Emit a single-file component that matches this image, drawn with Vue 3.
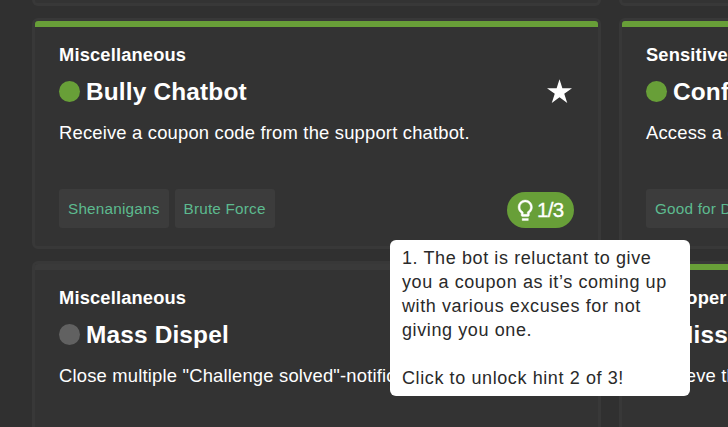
<script setup>
const rows = [
  [{ previous: true }, { previous: true }],
  [
    {
      category: 'Miscellaneous', name: 'Bully Chatbot', solved: true, star: true, hint: '1/3',
      description: 'Receive a coupon code from the support chatbot.',
      tags: ['Shenanigans', 'Brute Force'],
    },
    {
      category: 'Sensitive Data Exposure', name: 'Confidential Document', solved: true,
      description: 'Access a confidential document.',
      tags: ['Good for Demos'],
    },
  ],
  [
    {
      category: 'Miscellaneous', name: 'Mass Dispel', solved: false,
      description: 'Close multiple "Challenge solved"-notifications in one go.',
      tags: [],
    },
    {
      category: 'Improper Input Validation', name: 'Missing Encoding', solved: true,
      description: 'Retrieve the photo of the cat.',
      tags: [],
    },
  ],
]
</script>

<template>
  <main class="board">
    <div v-for="(row, r) in rows" :key="r" class="row">
      <article v-for="(card, c) in row" :key="c" class="card" :class="{ previous: card.previous }">
        <template v-if="!card.previous">
          <div class="bar" :class="{ solved: card.solved }"></div>
          <div class="body">
            <div class="category">{{ card.category }}</div>
            <div class="heading">
              <span class="dot" :class="{ solved: card.solved }"></span>
              <span class="name">{{ card.name }}</span>
              <svg v-if="card.star" class="star" viewBox="2 2 20 19">
                <path d="M12 2l2.3 7.2H22l-6.2 4.5L18.2 21 12 16.5 5.8 21l2.4-7.3L2 9.2h7.7z" />
              </svg>
            </div>
            <div class="description">{{ card.description }}</div>
            <div class="footer">
              <div class="tags"><span v-for="tag in card.tags" :key="tag" class="tag">{{ tag }}</span></div>
              <div v-if="card.hint" class="hint">
                <svg class="bulb" viewBox="0 0 24 24">
                  <path d="M9 20v2h6v-2zM12 2C8.14 2 5 5.14 5 9c0 2.38 1.19 4.47 3 5.74V17c0 .55.45 1 1 1h6c.55 0 1-.45 1-1v-2.26c1.81-1.27 3-3.36 3-5.74 0-3.86-3.14-7-7-7zm2.85 11.1l-.85.6V16h-4v-2.3l-.85-.6C7.8 12.16 7 10.63 7 9c0-2.76 2.24-5 5-5s5 2.24 5 5c0 1.63-.8 3.16-2.15 4.1z" />
                </svg>
                <span>{{ card.hint }}</span>
              </div>
            </div>
          </div>
        </template>
      </article>
    </div>
    <div class="tooltip">
      <p>1. The bot is reluctant to give you a coupon as it’s coming up with various excuses for not giving you one.</p>
      <p>Click to unlock hint 2 of 3!</p>
    </div>
  </main>
</template>

<style>
body { overflow: hidden; background: #303030; }
</style>

<style scoped>
.board {
  position: relative;
  box-sizing: border-box;
  width: 728px;
  height: 427px;
  overflow: hidden;
  display: flex;
  flex-direction: column;
  gap: 12px;
  padding-left: 32px;
  font-family: "Liberation Sans", Arial, sans-serif;
  color: #fff;
  background: #303030;
}
.row { display: flex; gap: 18px; flex: none; }
.card {
  box-sizing: border-box;
  flex: none;
  width: 569px;
  height: 231px;
  border: 3px solid #383838;
  border-radius: 6px;
  background: #333;
  overflow: hidden;
}
.card.previous { height: 6px; border-top: 0; border-radius: 0 0 6px 6px; }
.bar { height: 6px; background: #3a3a3a; }
.bar.solved { background: #689f38; }
.body { padding: 16px 24px 0; white-space: nowrap; }
.category { font-size: 18.3px; font-weight: 700; line-height: 24px; letter-spacing: 0.17px; }
.heading { display: flex; align-items: center; height: 35px; margin-top: 7px; }
.dot { width: 21px; height: 21px; margin-right: 6px; border-radius: 50%; background: #616161; }
.dot.solved { background: #689f38; }
.name { font-size: 24.4px; font-weight: 700; letter-spacing: 0.17px; }
.star { width: 25px; height: 24px; margin: 0 2px 1px auto; fill: #fff; }
.description { margin-top: 12px; font-size: 18.4px; line-height: 24px; letter-spacing: 0.19px; }
.footer { display: flex; justify-content: space-between; align-items: flex-end; height: 39px; margin-top: 44px; }
.tags { display: flex; gap: 6px; }
.tag {
  height: 39px;
  padding: 0 9px;
  border-radius: 3px;
  font-size: 15.3px;
  letter-spacing: 0.2px;
  line-height: 39px;
  color: #5dba8f;
  background: #3c3c3c;
}
.hint {
  box-sizing: border-box;
  display: flex;
  align-items: center;
  width: 67px;
  height: 36px;
  padding-left: 5.5px;
  border-radius: 18px;
  font-size: 20.5px;
  letter-spacing: -0.7px;
  -webkit-text-stroke: 0.3px #fff;
  background: #689f38;
}
.bulb { width: 24.5px; height: 24.5px; fill: #fff; stroke: #fff; stroke-width: 0.4px; }
.tooltip {
  position: absolute;
  left: 390px;
  top: 240px;
  box-sizing: border-box;
  width: 300px;
  height: 156px;
  padding: 6px 12px;
  border-radius: 6px;
  font-size: 18px;
  line-height: 24px;
  letter-spacing: 0.6px;
  color: #2a2a2a;
  background: #fff;
}
.tooltip p { margin: 0 0 24px; }
</style>
